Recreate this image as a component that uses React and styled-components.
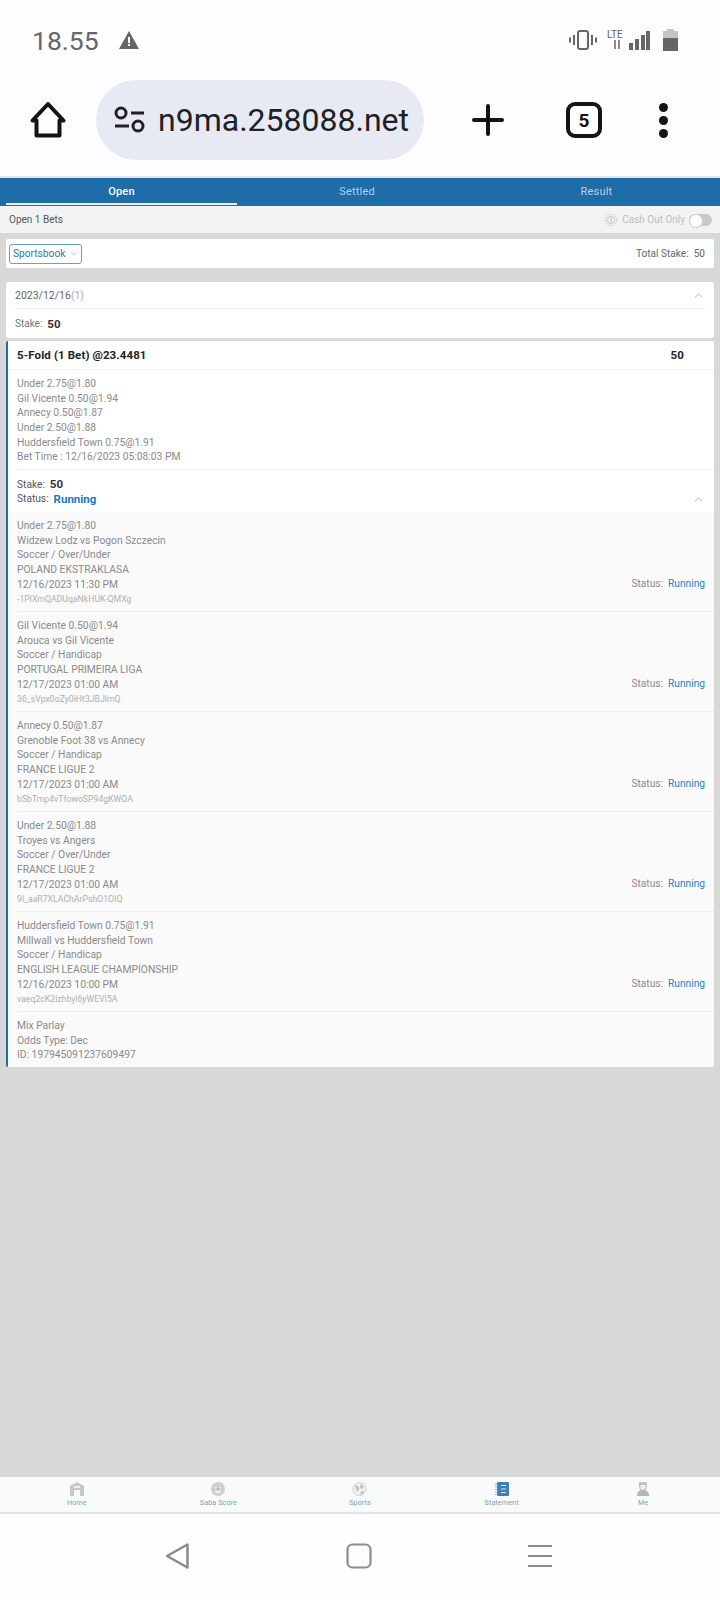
import React from 'react';
import styled, { createGlobalStyle } from 'styled-components';
import { ChevronDown, ChevronUp } from 'lucide-react';

const Global = createGlobalStyle`
  html, body { margin: 0; padding: 0; background: #d8d8d8; }
  body { font-family: Roboto, "Liberation Sans", sans-serif; }
  * { box-sizing: border-box; }
`;

const Page = styled.div`
  width: 720px;
  height: 1600px;
  display: flex;
  flex-direction: column;
  background: #d8d8d8;
`;

const StatusBar = styled.div`
  height: 80px;
  flex: none;
  padding: 0 42px 0 32px;
  display: flex;
  align-items: center;
  justify-content: space-between;
  background: #fffdff;
  color: #666;
`;

const StatusLeft = styled.div`
  display: flex;
  align-items: center;
  gap: 20px;
`;

const Clock = styled.span`
  font-size: 26.5px;
`;

const StatusRight = styled.div`
  display: flex;
  align-items: center;
  gap: 10px;
`;

const BrowserBar = styled.div`
  height: 98px;
  flex: none;
  padding: 0 0 16px 30px;
  display: flex;
  align-items: center;
  background: #fffdff;
  border-bottom: 2px solid #e4e4ec;
`;

const UrlPill = styled.div`
  width: 328px;
  height: 80px;
  margin-left: 30px;
  padding-left: 18px;
  display: flex;
  align-items: center;
  gap: 12px;
  border-radius: 40px;
  background: #e8eaf3;
  color: #202124;
  font-size: 32px;
  white-space: nowrap;
`;

const BrowserActions = styled.div`
  display: flex;
  align-items: center;
  margin-left: 48px;
`;

const TabCount = styled.div`
  width: 36px;
  height: 36px;
  margin-left: 62px;
  display: flex;
  align-items: center;
  justify-content: center;
  border: 4px solid #141414;
  border-radius: 9px;
  color: #141414;
  font-size: 19px;
  font-weight: 700;
`;

const Dots = styled.div`
  margin-left: 57px;
  display: flex;
  flex-direction: column;
  gap: 4px;
  i {
    display: block;
    width: 9px;
    height: 9px;
    border-radius: 50%;
    background: #141414;
  }
`;

const Tabs = styled.div`
  height: 28px;
  flex: none;
  padding-left: 6px;
  display: grid;
  grid-template-columns: 231px 240px 239px;
  background: #1e6ca8;
`;

const Tab = styled.div`
  padding-top: 2px;
  display: flex;
  align-items: center;
  justify-content: center;
  font-size: 11px;
  font-weight: ${(p) => (p.$active ? 500 : 400)};
  letter-spacing: 0.2px;
  color: ${(p) => (p.$active ? '#fff' : '#b9d0e4')};
  border-bottom: 2px solid ${(p) => (p.$active ? '#e8f0f6' : 'transparent')};
  margin-bottom: 1px;
`;

const SubBar = styled.div`
  height: 27px;
  flex: none;
  padding: 0 8px 0 9px;
  display: flex;
  align-items: center;
  justify-content: space-between;
  background: #f3f3f3;
  color: #555;
  font-size: 10px;
`;

const CashOut = styled.div`
  display: flex;
  align-items: center;
  gap: 5px;
  color: #bdbdbd;
`;

const Toggle = styled.span`
  width: 23px;
  height: 12px;
  display: block;
  border-radius: 6px;
  background: #c9c9c9;
  margin-left: -1px;
  &::before {
    content: '';
    display: block;
    width: 12px;
    height: 12px;
    border-radius: 50%;
    background: #fff;
    border: 1px solid #ccc;
  }
`;

const Cards = styled.div`
  flex: 1;
  padding: 6px 6px 0;
  display: flex;
  flex-direction: column;
`;

const FilterCard = styled.div`
  height: 29px;
  padding: 0 9px 0 3px;
  display: flex;
  align-items: center;
  justify-content: space-between;
  background: #fff;
  border-radius: 2px;
  font-size: 10.1px;
  color: #666;
`;

const Select = styled.div`
  width: 73px;
  height: 20px;
  padding-left: 3px;
  display: flex;
  align-items: center;
  gap: 4px;
  border: 1px solid #6b9fc4;
  border-radius: 3px;
  color: #2d78ae;
  font-size: 10.2px;
`;

const DateCard = styled.div`
  height: 56px;
  margin-top: 14px;
  padding: 0 9px;
  background: #fff;
  border-radius: 2px;
`;

const DateRow = styled.div`
  height: 27px;
  display: flex;
  align-items: center;
  justify-content: space-between;
  border-bottom: 1px solid #f2f2f2;
  color: #666;
  font-size: 10.5px;
  em { font-style: normal; color: #aaa; }
`;

const StakeRow = styled.div`
  height: 29px;
  display: flex;
  align-items: center;
  gap: 5px;
  color: #777;
  font-size: 10px;
  b { color: #333; font-size: 11.5px; font-weight: 700; }
`;

const BetCard = styled.div`
  height: 726px;
  margin-top: 3px;
  display: flex;
  flex-direction: column;
  background: #fff;
  border-left: 2px solid #1e6ca8;
  border-radius: 2px;
`;

const BetHead = styled.div`
  height: 29px;
  flex: none;
  padding: 0 30px 0 9px;
  display: flex;
  align-items: center;
  justify-content: space-between;
  border-bottom: 1px solid #f2f2f2;
  color: #222;
  font-size: 11.5px;
  font-weight: 700;
  letter-spacing: 0.1px;
`;

const Summary = styled.div`
  height: 100px;
  flex: none;
  margin-left: 9px;
  padding-top: 7px;
  border-bottom: 1px solid #f0f0f0;
`;

const Line = styled.div`
  height: 14.7px;
  line-height: 14.7px;
  font-size: 10.3px;
  color: #8a8a8a;
  white-space: nowrap;
`;

const StakeBlock = styled.div`
  height: 42px;
  flex: none;
  padding: 7px 9px 0;
  position: relative;
  color: #555;
  font-size: 10.2px;
`;

const StakeLine = styled.div`
  height: 14.5px;
  display: flex;
  align-items: center;
  gap: 5px;
  b { font-size: 11.5px; font-weight: 700; color: ${(p) => p.$color || '#333'}; }
`;

const Collapse = styled.div`
  position: absolute;
  right: 9px;
  bottom: 6px;
  color: #888;
  display: flex;
`;

const Items = styled.div`
  flex: 1;
  display: flex;
  flex-direction: column;
  background: #fafafa;
`;

const Item = styled.div`
  height: 100px;
  flex: none;
  margin-left: 9px;
  padding: 7px 9px 0 0;
  display: flex;
  justify-content: space-between;
  border-bottom: 1px solid #eeeeee;
`;

const ItemCode = styled.div`
  height: 15px;
  line-height: 15px;
  font-size: 8.7px;
  color: #b0b0b0;
  white-space: nowrap;
`;

const ItemStatus = styled.div`
  align-self: flex-end;
  margin-bottom: 22px;
  display: flex;
  gap: 5px;
  font-size: 10.2px;
  color: #8a8a8a;
  span { color: #2d7fbd; }
`;

const Footer = styled.div`
  margin-left: 9px;
  padding-top: 7px;
`;

const BottomNav = styled.div`
  height: 37px;
  flex: none;
  display: grid;
  grid-template-columns: repeat(5, 1fr);
  padding: 0 6px;
  background: #f9fafa;
  border-bottom: 2px solid #e2e2ea;
`;

const NavItem = styled.div`
  padding-top: 5px;
  display: flex;
  flex-direction: column;
  align-items: center;
  gap: 2px;
  color: #7ba3c0;
  font-size: 7.2px;
  letter-spacing: 0.1px;
`;

const AndroidNav = styled.div`
  height: 86px;
  flex: none;
  padding: 0 168px 2px 165px;
  display: flex;
  align-items: center;
  justify-content: space-between;
  background: #fffdff;
`;

const items = [
  ['Under 2.75@1.80', 'Widzew Lodz vs Pogon Szczecin', 'Soccer / Over/Under', 'POLAND EKSTRAKLASA', '12/16/2023 11:30 PM', '-1PlXmQADUqaNkHUK-QMXg'],
  ['Gil Vicente 0.50@1.94', 'Arouca vs Gil Vicente', 'Soccer / Handicap', 'PORTUGAL PRIMEIRA LIGA', '12/17/2023 01:00 AM', '36_sVpx0oZy0iHt3JBJlmQ'],
  ['Annecy 0.50@1.87', 'Grenoble Foot 38 vs Annecy', 'Soccer / Handicap', 'FRANCE LIGUE 2', '12/17/2023 01:00 AM', 'bSbTmp4vTfowoSP94gKWOA'],
  ['Under 2.50@1.88', 'Troyes vs Angers', 'Soccer / Over/Under', 'FRANCE LIGUE 2', '12/17/2023 01:00 AM', '9l_aaR7XLAChArPshO1OIQ'],
  ['Huddersfield Town 0.75@1.91', 'Millwall vs Huddersfield Town', 'Soccer / Handicap', 'ENGLISH LEAGUE CHAMPIONSHIP', '12/16/2023 10:00 PM', 'vaeq2cK2izhbyl6yWEVI5A'],
];

const summary = [
  'Under 2.75@1.80',
  'Gil Vicente 0.50@1.94',
  'Annecy 0.50@1.87',
  'Under 2.50@1.88',
  'Huddersfield Town 0.75@1.91',
  'Bet Time : 12/16/2023 05:08:03 PM',
];

function WarnIcon() {
  return (
    <svg width="20" height="18" viewBox="0 0 20 18">
      <path d="M10 0 L20 18 H0 Z" fill="#666" />
      <rect x="9" y="6" width="2" height="6" fill="#fffdff" />
      <rect x="9" y="13" width="2" height="2" fill="#fffdff" />
    </svg>
  );
}

function StatusIcons() {
  return (
    <StatusRight>
      <svg width="28" height="20" viewBox="0 0 28 20" fill="none" stroke="#666" strokeWidth="2">
        <rect x="9" y="1" width="10" height="18" rx="2" />
        <path d="M5 5v10M1 7.500v5M23 5v10M27 7.500v5" />
      </svg>
      <svg width="43" height="22" viewBox="0 0 43 22">
        <text x="0" y="9" fontSize="10" fill="#666" fontFamily="Roboto">LTE</text>
        <path d="M8 11v9M12 11v9" stroke="#666" strokeWidth="1.500" />
        <path d="M22 14h4v7h-4zM28 10h4v11h-4z" fill="#666" />
        <path d="M34 6h4v15h-4zM39 2h4v19h-4z" fill="#666" />
      </svg>
      <svg width="15" height="22" viewBox="0 0 15 22" style={{ marginLeft: 3 }}>
        <path d="M4 0h7v2h4v8H0V2h4z" fill="#c4c4c4" />
        <rect y="9" width="15" height="13" fill="#666" />
      </svg>
    </StatusRight>
  );
}

function HomeIcon() {
  return (
    <svg width="36" height="38" viewBox="0 0 36 38" fill="none" stroke="#141414" strokeWidth="4" strokeLinejoin="round">
      <path d="M2.500 19.500 18 3 33.500 19.500 H29.500 V34.500 H6.500 V19.500 Z" />
    </svg>
  );
}

function TuneIcon() {
  return (
    <svg width="32" height="28" viewBox="0 0 32 28" fill="none" stroke="#202124" strokeWidth="3">
      <circle cx="7" cy="7" r="5" />
      <path d="M17 7h13M1 20h14" />
      <circle cx="24" cy="20" r="5" />
    </svg>
  );
}

function PlusIcon() {
  return (
    <svg width="32" height="32" viewBox="0 0 32 32" stroke="#141414" strokeWidth="4" strokeLinecap="round">
      <path d="M16 2v28M2 16h28" />
    </svg>
  );
}

function CoinIcon() {
  return (
    <svg width="12" height="12" viewBox="0 0 12 12" fill="none" stroke="#c4c4c4">
      <circle cx="6" cy="6" r="5.500" strokeDasharray="2 1" />
      <circle cx="6" cy="6" r="3.500" />
      <path d="M7 4.500H5.500v1.500h1v1.500H5M6 3.500v5" strokeWidth="0.600" />
    </svg>
  );
}

function NavHome() {
  return (
    <svg width="14" height="14" viewBox="0 0 14 14">
      <path d="M0 4 7 0l7 4v10h-4V8H4v6H0z" fill="#c8c8c8" />
      <rect x="4" y="4" width="6" height="2" fill="#f0f0f0" />
    </svg>
  );
}

function NavScore() {
  return (
    <svg width="14" height="14" viewBox="0 0 14 14">
      <circle cx="7" cy="7" r="7" fill="#cfcfcf" />
      <path d="M4 4l3 2 3-2-1 4 1 3H4l1-3z" fill="#eee" />
      <circle cx="7" cy="7" r="1.500" fill="#aaa" />
    </svg>
  );
}

function NavSports() {
  return (
    <svg width="15" height="14" viewBox="0 0 15 14">
      <circle cx="7.500" cy="7" r="6.500" fill="#f2f2f2" stroke="#cfcfcf" />
      <path d="M3 3l3.500 1 1 3.500-3 2.500zM8.500 2l3.500 2.500-2 3-2-2zM8.500 9.500l3-1v3L8.500 13z" fill="#c4c4c4" />
    </svg>
  );
}

function NavStatement() {
  return (
    <svg width="14" height="14" viewBox="0 0 14 14">
      <rect x="2" y="0" width="12" height="14" rx="1" fill="#3f7fb5" />
      <path d="M0 2.500h3M0 5h3M0 7.500h3M0 10h3M0 12.500h3" stroke="#7fa9cc" strokeWidth="0.800" />
      <path d="M6 3.500h5M6 7h5M6 10.500h5" stroke="#d4e4f1" />
    </svg>
  );
}

function NavMe() {
  return (
    <svg width="12" height="14" viewBox="0 0 12 14">
      <path d="M2 0h8v5l-1 3H3L2 5z" fill="#c4c4c4" />
      <path d="M3.500 3h5v3l-1 1.500h-3L3.500 6z" fill="#f1f1f1" />
      <path d="M0 14c0-4 2-6 6-6s6 2 6 6z" fill="#b5b5b5" />
    </svg>
  );
}

function BackIcon() {
  return (
    <svg width="24" height="28" viewBox="0 0 24 28" fill="none" stroke="#8c8c8c" strokeWidth="2.500" strokeLinejoin="round">
      <path d="M2 14 22.500 2.500v23z" />
    </svg>
  );
}

function SquareIcon() {
  return (
    <svg width="26" height="26" viewBox="0 0 26 26" fill="none" stroke="#8c8c8c" strokeWidth="2.200">
      <rect x="1.500" y="1.500" width="23" height="23" rx="5" />
    </svg>
  );
}

function MenuIcon() {
  return (
    <svg width="24" height="24" viewBox="0 0 24 24" stroke="#8c8c8c" strokeWidth="2.200">
      <path d="M0 2h24M0 12h24M0 22h24" />
    </svg>
  );
}

export default function App() {
  return (
    <Page>
      <Global />
      <StatusBar>
        <StatusLeft>
          <Clock>18.55</Clock>
          <WarnIcon />
        </StatusLeft>
        <StatusIcons />
      </StatusBar>

      <BrowserBar>
        <HomeIcon />
        <UrlPill>
          <TuneIcon />
          n9ma.258088.net
        </UrlPill>
        <BrowserActions>
          <PlusIcon />
          <TabCount>5</TabCount>
          <Dots><i /><i /><i /></Dots>
        </BrowserActions>
      </BrowserBar>

      <Tabs>
        <Tab $active>Open</Tab>
        <Tab>Settled</Tab>
        <Tab>Result</Tab>
      </Tabs>

      <SubBar>
        <span>Open 1 Bets</span>
        <CashOut>
          <CoinIcon />
          <span>Cash Out Only</span>
          <Toggle />
        </CashOut>
      </SubBar>

      <Cards>
        <FilterCard>
          <Select>
            Sportsbook
            <ChevronDown size={10} color="#8aa9c0" strokeWidth={1.5} />
          </Select>
          <span>Total Stake:&nbsp; 50</span>
        </FilterCard>

        <DateCard>
          <DateRow>
            <span>2023/12/16<em>(1)</em></span>
            <ChevronUp size={13} color="#888" strokeWidth={1.2} />
          </DateRow>
          <StakeRow>
            Stake: <b>50</b>
          </StakeRow>
        </DateCard>

        <BetCard>
          <BetHead>
            <span>5-Fold (1 Bet) @23.4481</span>
            <span>50</span>
          </BetHead>
          <Summary>
            {summary.map((line) => <Line key={line}>{line}</Line>)}
          </Summary>
          <StakeBlock>
            <StakeLine>Stake: <b>50</b></StakeLine>
            <StakeLine $color="#1e78bd">Status: <b>Running</b></StakeLine>
            <Collapse><ChevronUp size={13} strokeWidth={1.2} /></Collapse>
          </StakeBlock>
          <Items>
            {items.map((it) => (
              <Item key={it[5]}>
                <div>
                  {it.slice(0, 5).map((line, i) => <Line key={i}>{line}</Line>)}
                  <ItemCode>{it[5]}</ItemCode>
                </div>
                <ItemStatus>Status: <span>Running</span></ItemStatus>
              </Item>
            ))}
            <Footer>
              <Line>Mix Parlay</Line>
              <Line>Odds Type: Dec</Line>
              <Line>ID: 197945091237609497</Line>
            </Footer>
          </Items>
        </BetCard>
      </Cards>

      <BottomNav>
        <NavItem><NavHome />Home</NavItem>
        <NavItem><NavScore />Saba Score</NavItem>
        <NavItem><NavSports />Sports</NavItem>
        <NavItem><NavStatement />Statement</NavItem>
        <NavItem><NavMe />Me</NavItem>
      </BottomNav>

      <AndroidNav>
        <BackIcon />
        <SquareIcon />
        <MenuIcon />
      </AndroidNav>
    </Page>
  );
}
